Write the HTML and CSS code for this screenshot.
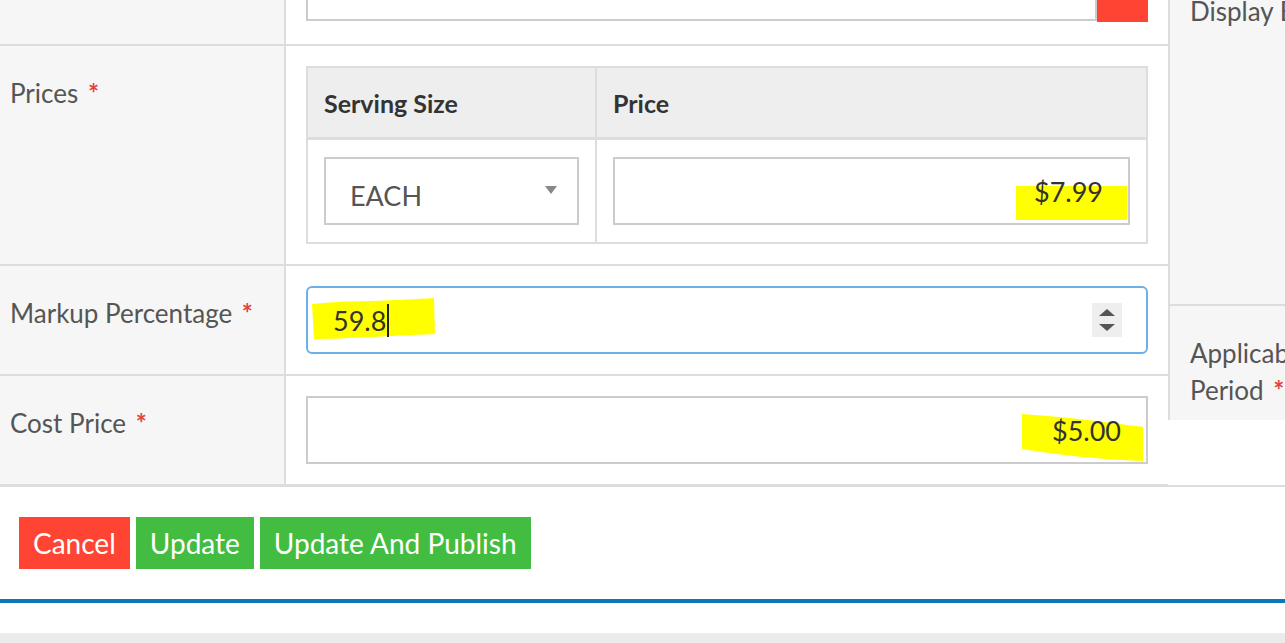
FILE: index.html
```html
<!DOCTYPE html>
<html>
<head>
<meta charset="utf-8">
<link rel="stylesheet" href="styles.css">
</head>
<body>
<div class="viewport">
  <div class="page">
    <div class="top">
      <div class="form">
        <div class="row row-first">
          <div class="label"></div>
          <div class="field first-field">
            <div class="input-group">
              <div class="inp grow"></div>
              <div class="addon"></div>
            </div>
          </div>
        </div>
        <div class="row">
          <div class="label">Prices <span class="req">*</span></div>
          <div class="field">
            <div class="ptable">
              <div class="th col1">Serving Size</div>
              <div class="th">Price</div>
              <div class="td col1">
                <div class="inp select">
                  <span class="sel-text">EACH</span>
                  <span class="caret-down"></span>
                </div>
              </div>
              <div class="td">
                <div class="inp right price">
                  <span class="hl-rect"></span>
                  <span class="val">$7.99</span>
                </div>
              </div>
            </div>
          </div>
        </div>
        <div class="row">
          <div class="label">Markup Percentage <span class="req">*</span></div>
          <div class="field">
            <div class="inp focus">
              <svg class="hl hl-markup" width="124" height="42" viewBox="0 0 124 42"><path d="M1 6 C20 4 40 3 60 3 C85 2 105 1 123 0 L124 36 C100 37 80 38 60 39 C40 40 20 41 3 41 Z" fill="#ffff00"/></svg>
              <span class="val">59.8</span><span class="cursor"></span>
              <span class="spinner"><span class="tri-up"></span><span class="tri-down"></span></span>
            </div>
          </div>
        </div>
        <div class="row last">
          <div class="label">Cost Price <span class="req">*</span></div>
          <div class="field">
            <div class="inp right cost">
              <svg class="hl hl-cost" width="122" height="48" viewBox="0 0 122 48"><path d="M0 0 C30 2 60 5 90 9 C105 11 115 12 121 13 L121 47 C100 46 80 45 60 43 C40 41 20 38 0 35 Z" fill="#ffff00"/></svg>
              <span class="val">$5.00</span>
            </div>
          </div>
        </div>
      </div>
      <div class="side">
        <div class="side-row side-a"><div class="side-label">Display End</div></div>
        <div class="side-row side-b"><div class="side-label">Applicable Period <span class="req">*</span></div></div>
        <div class="side-rule"></div>
      </div>
    </div>
    <div class="actions">
      <button class="btn btn-red">Cancel</button>
      <button class="btn btn-green">Update</button>
      <button class="btn btn-green">Update And Publish</button>
    </div>
    <div class="footer"></div>
  </div>
</div>
</body>
</html>
```
FILE: styles.css
```css
* { box-sizing: border-box; }
html, body { margin: 0; padding: 0; background: #fff; }
body { font-family: Lato, "Open Sans", "Liberation Sans", sans-serif; color: #555; }
.viewport { width: 1285px; height: 643px; overflow: hidden; }
.page { margin-top: -67px; width: 1285px; }
.top { display: flex; align-items: flex-start; }
.form { width: 1168px; flex: none; }
.row { display: grid; grid-template-columns: 286px 1fr; border-bottom: 2px solid #ddd; }
.row.last { border-bottom-width: 3px; }
.label { background: #f6f6f6; border-right: 2px solid #ddd; padding: 29px 10px 0; font-size: 26px; line-height: 37px; color: #555; }
.req { color: #e0453c; font-weight: 700; margin-left: 3px; }
.field { padding: 20px; }
.first-field { padding-bottom: 23px; }
.input-group { display: flex; }
.grow { flex: 1; height: 71px; border-top: none; }
.addon { width: 51px; background: #ff4433; margin-bottom: -1px; }
.inp { height: 68px; border: 2px solid #ccc; background: #fff; display: flex; align-items: center; position: relative; font-size: 27px; color: #333; }
.inp.right { justify-content: flex-end; padding-right: 25px; }
.inp.focus { border-color: #6bb0e8; border-radius: 6px; padding-left: 25px; }
.val { position: relative; z-index: 1; }
.ptable { display: grid; grid-template-columns: 289px 1fr; border: 2px solid #ddd; }
.th { background: #eee; height: 72px; border-bottom: 3px solid #ddd; padding-left: 16px; display: flex; align-items: center; font-weight: 700; font-size: 25px; color: #333; }
.col1 { border-right: 2px solid #ddd; }
.td { padding: 17px 16px; }
.select { padding-left: 24px; color: #555; }
.sel-text { padding-top: 8px; }
.caret-down { margin-left: auto; margin-right: 20px; margin-top: -3px; width: 0; height: 0; border-left: 6px solid transparent; border-right: 6px solid transparent; border-top: 8px solid #888; }
.hl-rect { position: absolute; left: 401px; top: 27px; width: 111px; height: 34px; background: #ffff00; }
.hl { position: absolute; }
.hl-markup { left: 3px; top: 10px; }
.hl-cost { left: 714px; top: 16px; }
.cursor { display: inline-block; width: 2px; height: 33px; background: #222; margin-left: 1px; position: relative; z-index: 1; }
.spinner { margin-left: auto; margin-right: 24px; width: 30px; height: 34px; background: #eee; display: flex; flex-direction: column; align-items: center; justify-content: center; gap: 8px; }
.tri-up { width: 0; height: 0; border-left: 8px solid transparent; border-right: 8px solid transparent; border-bottom: 7px solid #555; }
.tri-down { width: 0; height: 0; border-left: 8px solid transparent; border-right: 8px solid transparent; border-top: 7px solid #555; }
.side { flex: 1; overflow: hidden; }
.side-row { background: #f6f6f6; border-left: 2px solid #ddd; width: 220px; }
.side-a { height: 373px; border-bottom: 2px solid #ddd; padding-top: 60px; }
.side-b { height: 114px; padding-top: 29px; }
.side-label { width: 175px; padding-left: 20px; font-size: 26px; line-height: 37px; color: #555; }
.side-rule { margin-top: 65px; height: 2px; background: #ddd; }
.actions { display: flex; gap: 6px; padding: 30px 19px 30px; border-bottom: 4px solid #0a78b8; }
.btn { height: 52px; border: none; padding: 0 14px; font-family: Lato, "Open Sans", sans-serif; font-size: 28px; color: #fff; line-height: 52px; }
.btn-red { background: #ff4433; }
.btn-green { background: #42bd42; }
.footer { margin-top: 30px; height: 20px; background: #ebebeb; }
```
